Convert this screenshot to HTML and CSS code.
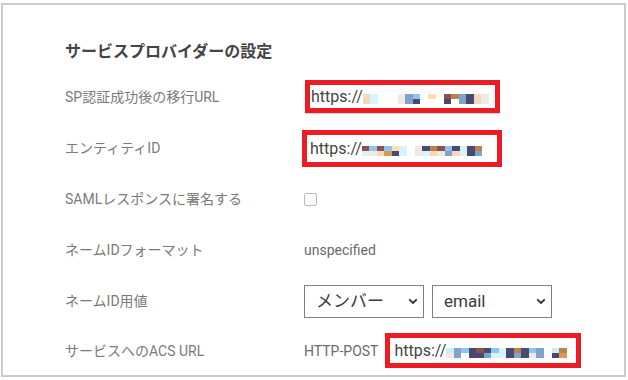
FILE: index.html
```html
<!DOCTYPE html>
<html lang="ja">

<head>
    <meta charset="UTF-8">
    <meta name="viewport" content="width=device-width, initial-scale=1.0">
    <title>サービスプロバイダーの設定</title>
    <link rel="stylesheet" href="styles.css">
</head>

<body>
    <div class="panel">
        <h2 class="title">サービスプロバイダーの設定</h2>
        <div class="form">
            <div class="label">SP認証成功後の移行URL</div>
            <div class="value">
                <div class="url-box box-1">
                    <span class="url">https://</span>
                    <span class="mosaic">
                        <i class="m bp"></i><i class="m bc"></i><i class="gap g3"></i>
                        <i class="m bl"></i><i class="m bb"></i><i class="m tl bn"></i><i class="gap g1"></i>
                        <i class="m tb"></i><i class="gap g1"></i>
                        <i class="m tr bn"></i><i class="m to"></i><i class="m bb"></i><i class="m tn bn"></i><i class="m bp"></i><i class="m bl"></i>
                    </span>
                </div>
            </div>

            <div class="label">エンティティID</div>
            <div class="value">
                <div class="url-box box-2">
                    <span class="url">https://</span>
                    <span class="mosaic">
                        <i class="m tr bc"></i><i class="m tl bl"></i><i class="m tr bp"></i><i class="m tl bo"></i><i class="m tb bn"></i>
                        <i class="m bc"></i><i class="gap g1"></i><i class="m bl"></i><i class="m tn bc"></i><i class="m to bp"></i><i class="m tr bl"></i>
                        <i class="m tl bb"></i><i class="m tn bp"></i><i class="m bc"></i><i class="m tn bn"></i><i class="m to bb"></i>
                    </span>
                </div>
            </div>

            <div class="label">SAMLレスポンスに署名する</div>
            <div class="value">
                <span class="checkbox"></span>
            </div>

            <div class="label">ネームIDフォーマット</div>
            <div class="value">
                <span class="text">unspecified</span>
            </div>

            <div class="label">ネームID用値</div>
            <div class="value">
                <div class="select-wrap">
                    <select class="select">
                        <option>メンバー</option>
                    </select>
                    <svg class="chevron" width="10" height="7" viewBox="0 0 10 7">
                        <path d="M1.2 1.4 L5 5 L8.8 1.4" fill="none" stroke="#333" stroke-width="1.9" />
                    </svg>
                </div>
                <div class="select-wrap">
                    <select class="select">
                        <option>email</option>
                    </select>
                    <svg class="chevron" width="10" height="7" viewBox="0 0 10 7">
                        <path d="M1.2 1.4 L5 5 L8.8 1.4" fill="none" stroke="#333" stroke-width="1.9" />
                    </svg>
                </div>
            </div>

            <div class="label">サービスへのACS URL</div>
            <div class="value">
                <span class="text">HTTP-POST</span>
                <div class="url-box box-3">
                    <span class="url">https://</span>
                    <span class="mosaic">
                        <i class="m tc bl"></i><i class="m bb"></i><i class="m tl"></i><i class="m tn bn"></i><i class="m tr bn"></i>
                        <i class="m tn bb"></i><i class="m tl bc"></i><i class="m bc"></i><i class="m tn bn"></i><i class="m to bb"></i>
                        <i class="m tn bn"></i><i class="m tl bl"></i><i class="m bb"></i><i class="gap g1"></i>
                        <i class="m tc bn"></i><i class="m to bo"></i>
                    </span>
                </div>
            </div>
        </div>
    </div>
</body>

</html>
```

FILE: styles.css
```css
body {
    margin: 0;
    background-color: #ffffff;
    font-family: Roboto, "Noto Sans CJK JP", sans-serif;
}

.panel {
    height: 370px;
    margin: 3px 0 0 1px;
    padding: 0 0 0 62px;
    width: 559px;
    border: 2px solid #cbcbcb;
}

.title {
    margin: 0;
    padding-top: 37px;
    height: 30px;
    line-height: 20px;
    font-size: 16px;
    font-weight: bold;
    color: #444444;
}

.form {
    display: grid;
    grid-template-columns: 239px auto;
    grid-auto-rows: 50.8px;
    align-items: center;
}

.label {
    font-size: 14px;
    color: #7a7a7a;
    line-height: 20px;
}

.value {
    display: flex;
    align-items: center;
}

.text {
    font-size: 14px;
    color: #6a6a6a;
}

.url-box {
    display: flex;
    align-items: center;
    box-sizing: border-box;
    border: 5px solid #ec1c24;
    background-color: #ffffff;
    padding-left: 1px;
    overflow: hidden;
}

.box-1 {
    width: 195px;
    height: 33px;
    margin-left: 1px;
    margin-top: -2px;
    box-shadow: 0 2px 0 -1px #d0d0d0;
}

.box-2 {
    width: 200px;
    height: 37px;
    margin-left: -2px;
    padding-left: 3px;
}

.box-3 {
    width: 196px;
    height: 35px;
    margin-left: 7px;
    margin-top: -1px;
    padding-left: 4px;
}

.url {
    font-size: 16px;
    color: #444444;
    white-space: nowrap;
}

.mosaic {
    display: flex;
    align-items: flex-end;
    height: 10px;
    margin-top: 5px;
}

.m {
    display: block;
    flex-shrink: 0;
    width: 7.5px;
    height: 5px;
    border-top: 5px solid transparent;
}

.gap {
    display: block;
    flex-shrink: 0;
}

.g1 {
    width: 8px;
}

.g3 {
    width: 20px;
}

.tl { border-top-color: #8ec5f0; }
.tb { border-top-color: #fde0a8; }
.tr { border-top-color: #8b5050; }
.to { border-top-color: #c0804a; }
.tn { border-top-color: #4a4a78; }
.tc { border-top-color: #c9eef7; }

.bn { background-color: #4a4770; }
.bb { background-color: #7fa3c9; }
.bp { background-color: #f2d9bc; }
.bl { background-color: #eeeae2; }
.bc { background-color: #d8f3fb; }
.bo { background-color: #d69a55; }

.checkbox {
    display: block;
    width: 11px;
    height: 11px;
    margin-top: 2px;
    border: 1px solid #bbbbbb;
    border-radius: 2px;
    background-color: #fafafa;
}

.select-wrap {
    position: relative;
    margin-right: 8px;
}

.select {
    display: block;
    appearance: none;
    width: 120px;
    height: 33px;
    margin-top: 1px;
    padding: 0 0 0 11px;
    border: 1px solid #808080;
    border-radius: 0;
    background-color: #ffffff;
    font-family: Roboto, "Noto Sans CJK JP", sans-serif;
    font-size: 17px;
    color: #3a3a3a;
}

.chevron {
    position: absolute;
    right: 6px;
    top: 14px;
}
```
